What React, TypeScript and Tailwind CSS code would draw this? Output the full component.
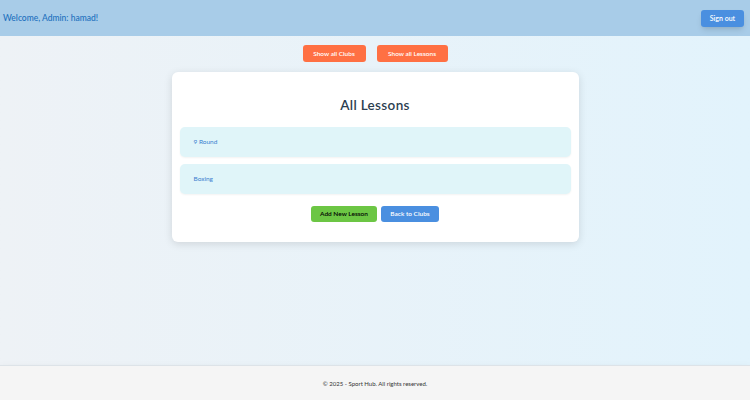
const lessons = ["9 Round", "Boxing"];

const App = () => {
  return (
    <div
      className="min-h-screen flex flex-col bg-gradient-to-r from-[#eef2f6] to-[#e2f3fc]"
      style={{ fontFamily: "Lato, 'Open Sans', sans-serif" }}
    >
      {/* header */}
      <header className="h-9 bg-[#a8cce8] flex items-center justify-between pl-[3px] pr-[6px]">
        <h2 className="text-[8.5px] font-medium text-[#1b6fbd]">
          Welcome, Admin: hamad!
        </h2>
        <button className="bg-[#4a8fe0] text-white text-[7px] font-semibold rounded-[3px] w-[43px] h-[17px] shadow-md">
          Sign out
        </button>
      </header>

      <main className="flex-1 flex flex-col items-center">
        <div className="flex gap-[11px] mt-[9px]">
          <button className="bg-[#ff7043] text-white text-[6.5px] font-semibold rounded-[3px] w-[63px] h-[17px]">
            Show all Clubs
          </button>
          <button className="bg-[#ff7043] text-white text-[6.5px] font-semibold rounded-[3px] w-[71px] h-[17px]">
            Show all Lessons
          </button>
        </div>

        {/* lessons card */}
        <div className="bg-white rounded-[6px] shadow-[0_2px_8px_rgba(0,0,0,0.12)] w-[407px] mt-[10px] px-2 pt-[24px] pb-[20px]">
          <h1 className="text-center text-[13.5px] font-semibold text-[#2c3e50] tracking-wide leading-[18px]">
            All Lessons
          </h1>
          <div className="flex flex-col gap-[7px] mt-[13px]">
            {lessons.map((lesson) => (
              <div
                key={lesson}
                className="bg-[#e0f5f9] rounded-[5px] h-[30px] flex items-center px-[14px] shadow-[0_1px_2px_rgba(0,0,0,0.05)]"
              >
                <span className="text-[6.5px] text-[#3b7fcf]">{lesson}</span>
              </div>
            ))}
          </div>
          <div className="flex justify-center gap-[4px] mt-[12px]">
            <button className="bg-[#6cc644] text-black text-[6.5px] font-semibold rounded-[3px] w-[66px] h-[16px]">
              Add New Lesson
            </button>
            <button className="bg-[#4a8fe0] text-white text-[6.5px] font-semibold rounded-[3px] w-[58px] h-[16px]">
              Back to Clubs
            </button>
          </div>
        </div>
      </main>

      {/* footer */}
      <footer className="h-[35px] bg-[#f5f5f5] border-t border-[#dde3e8] flex items-center justify-center shadow-[0_6px_10px_rgba(0,0,0,0.15)]">
        <p className="text-[6px] text-[#333]">
          © 2025 - Sport Hub. All rights reserved.
        </p>
      </footer>
    </div>
  );
};

export default App;
